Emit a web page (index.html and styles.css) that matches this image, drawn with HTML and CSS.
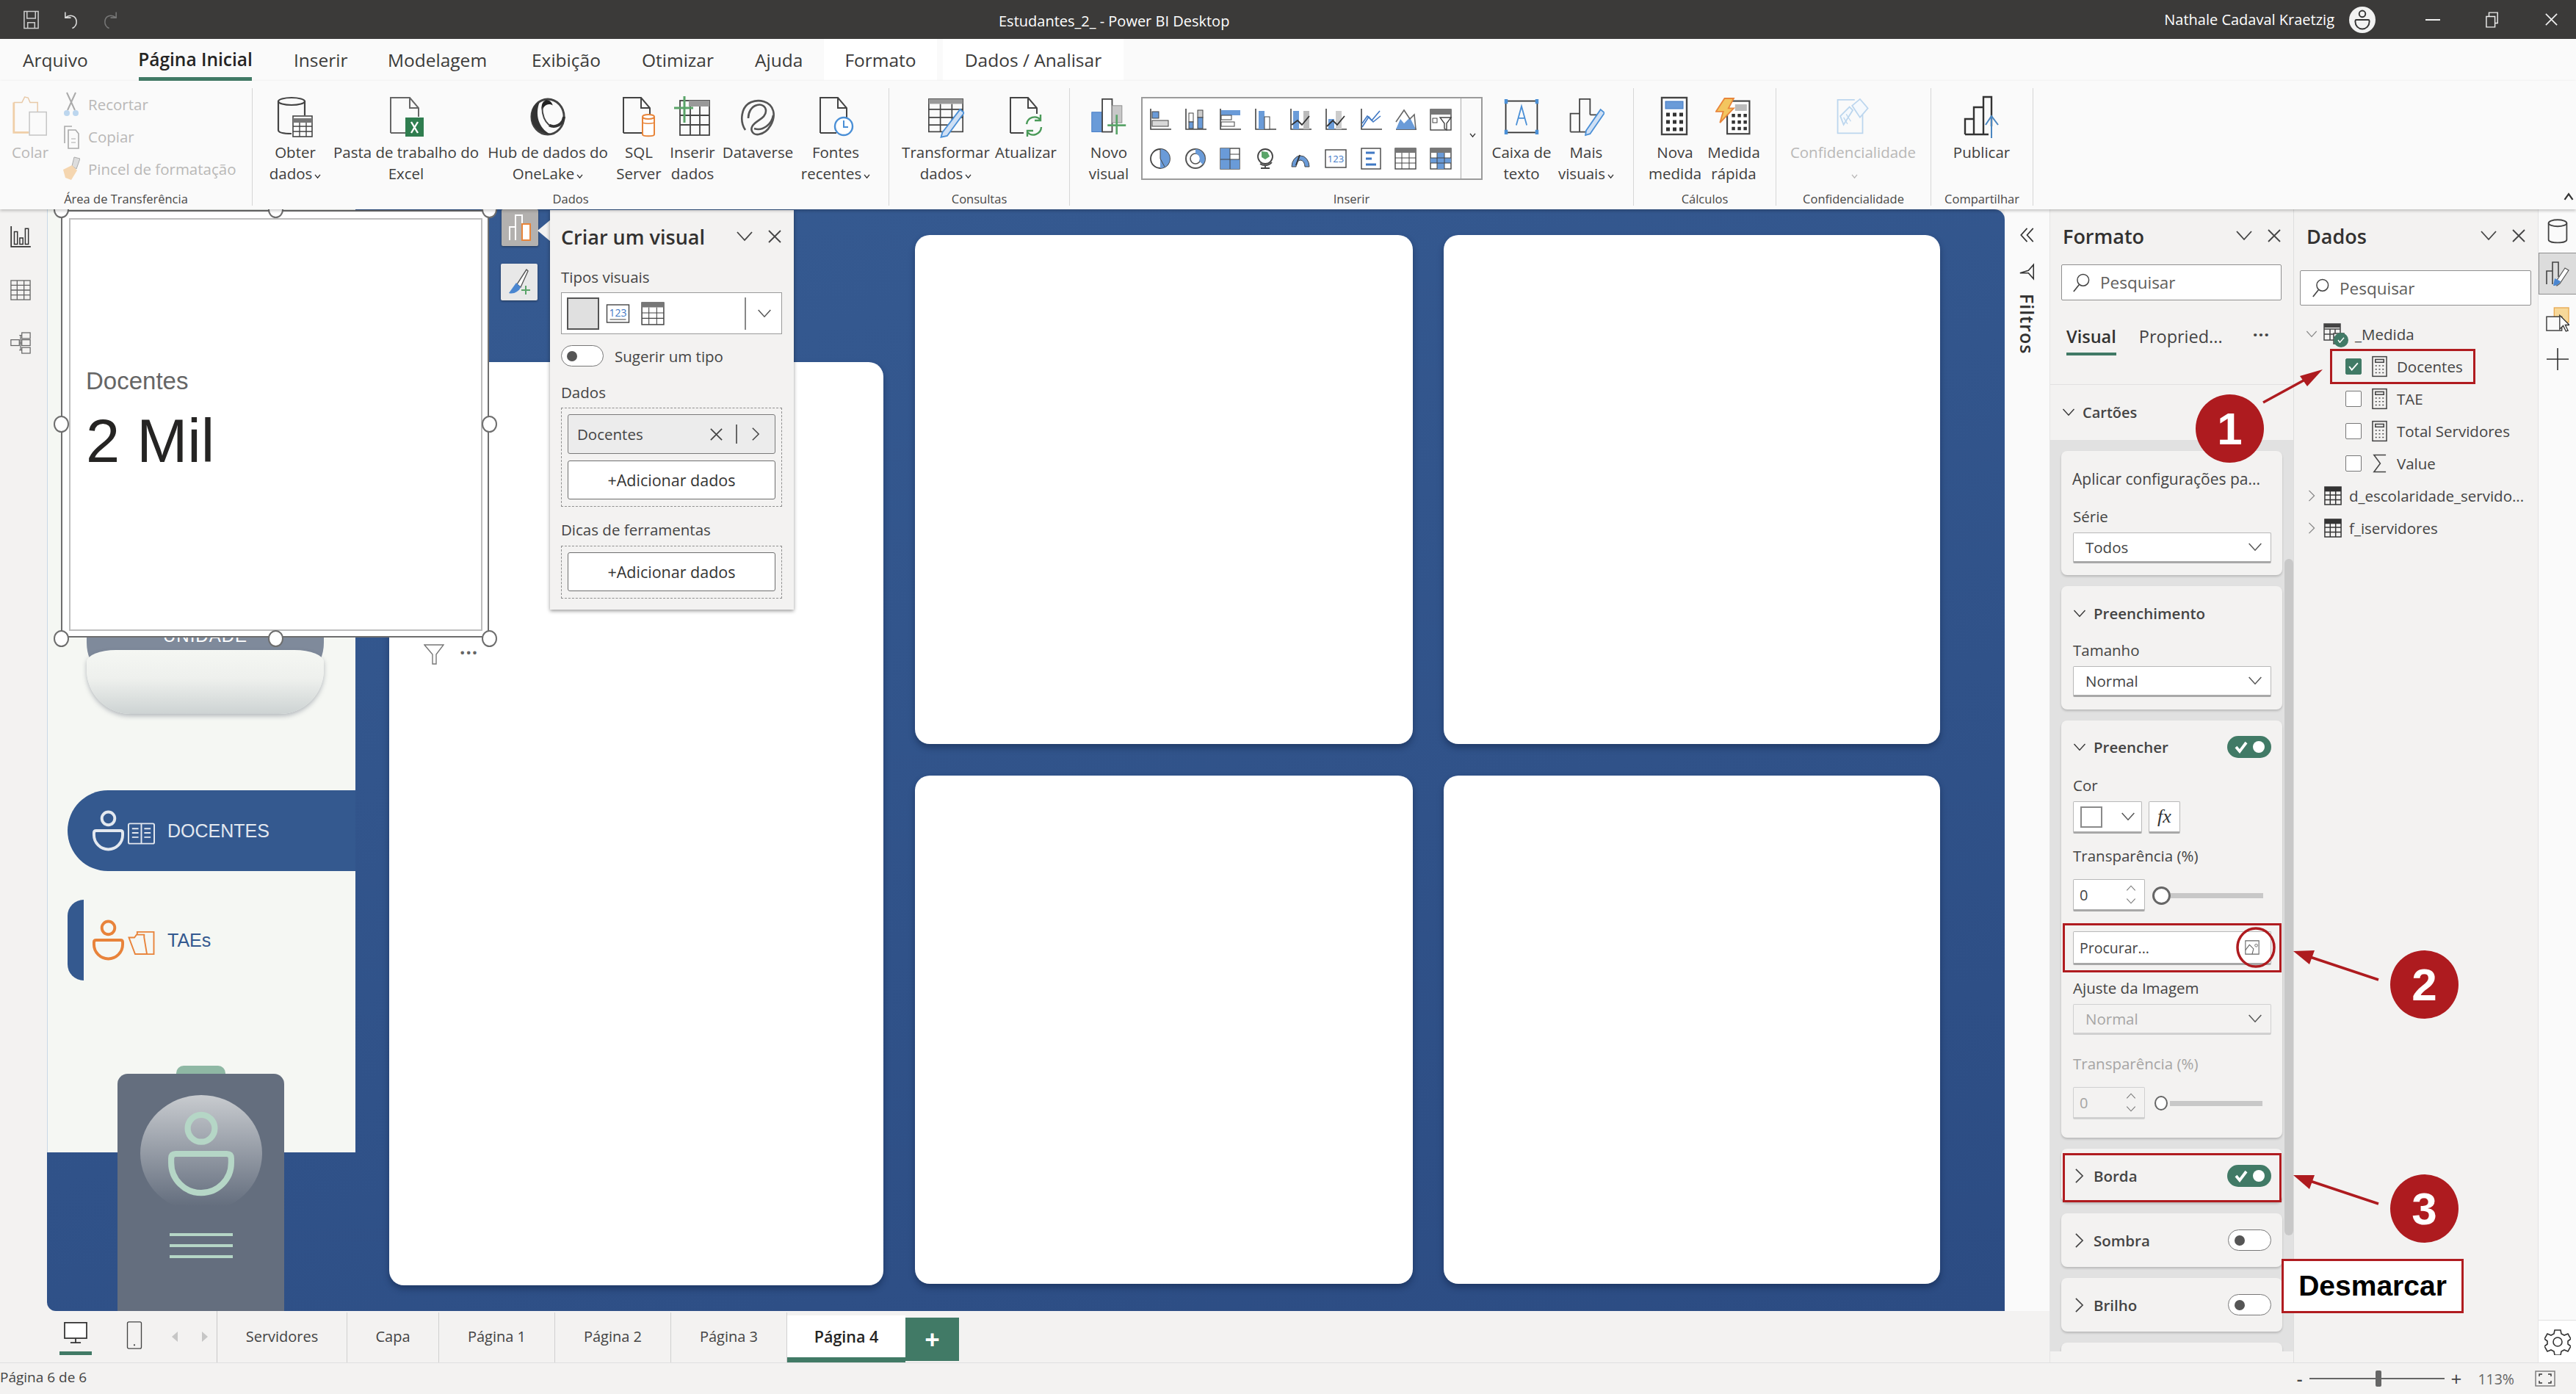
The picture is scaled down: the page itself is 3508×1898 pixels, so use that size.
FILE: index.html
```html
<!DOCTYPE html>
<html lang="pt-BR">
<head>
<meta charset="utf-8">
<title>Estudantes_2_ - Power BI Desktop</title>
<link rel="stylesheet" href="styles.css">
</head>
<body>
<svg class="sprite" aria-hidden="true">
  <defs>
    <symbol id="cv" viewBox="0 0 24 14"><path d="M2 1l10 11L22 1" fill="none" stroke="currentColor" stroke-width="1.8"/></symbol>
    <symbol id="cvr" viewBox="0 0 14 24"><path d="M2 2l10 10L2 22" fill="none" stroke="currentColor" stroke-width="1.8"/></symbol>
    <symbol id="xx" viewBox="0 0 20 20"><path d="M2 2l16 16M18 2L2 18" fill="none" stroke="currentColor" stroke-width="1.8"/></symbol>
    <symbol id="car" viewBox="0 0 10 8"><path d="M1 1l4 5 4-5" fill="none" stroke="currentColor" stroke-width="1.6"/></symbol>
    <symbol id="lens" viewBox="0 0 26 30"><circle cx="16" cy="11" r="8.5" fill="none" stroke="currentColor" stroke-width="1.6"/><path d="M10 18L2 28" fill="none" stroke="currentColor" stroke-width="1.8"/></symbol>
    <symbol id="person" viewBox="0 0 46 56"><g fill="none" stroke="currentColor" stroke-width="4"><circle cx="23" cy="11" r="9"/><path d="M3 31q0-3 3-3h34q3 0 3 3v3a20 20 0 0 1-40 0z"/></g></symbol>
    <symbol id="calc" viewBox="0 0 22 30"><g fill="none" stroke="#444" stroke-width="1.6"><rect x="1" y="1" width="20" height="28"/><rect x="5" y="5" width="12" height="4"/><path d="M5 14h2M10 14h2M15 14h2M5 19h2M10 19h2M15 19h2M5 24h2M10 24h2M15 24h2"/></g></symbol>
    <symbol id="tbl" viewBox="0 0 26 30"><g fill="none" stroke="#333" stroke-width="1.6"><rect x="1" y="2" width="24" height="26"/><path d="M1 8h24M1 14h24M1 21h24M9 8v20M17 8v20"/></g><rect x="1" y="2" width="24" height="6" fill="#333"/></symbol>
    <symbol id="sum" viewBox="0 0 22 30"><path d="M20 3H3l9 12L3 27h17" fill="none" stroke="#444" stroke-width="1.6"/></symbol>
    <symbol id="tog" viewBox="0 0 60 30"><rect width="60" height="30" rx="15" fill="#417a66"/><path d="M12 15l5 6 9-12" fill="none" stroke="#fff" stroke-width="3.8"/><circle cx="43" cy="15" r="8" fill="#fff"/></symbol>

    <symbol id="i-paste" viewBox="0 0 54 62"><path d="M3 10h12l4-8 5 1 3 7h11v18" fill="none" stroke="#e8c9a8" stroke-width="1.6"/><path d="M3 10v44h22" fill="none" stroke="#f0cfa8" stroke-width="3"/><rect x="26" y="24" width="25" height="34" fill="#fafafa" stroke="#c4c4c4" stroke-width="1.6"/></symbol>
    <symbol id="i-db" viewBox="0 0 50 56"><g fill="none" stroke="#444" stroke-width="2.2"><path d="M2 6v40c0 4 8 5 18 5M38 6v20"/><ellipse cx="20" cy="7" rx="18" ry="5"/></g><rect x="22" y="27" width="26" height="28" fill="#fff" stroke="#444" stroke-width="1.6"/><path d="M22 33h26" stroke="#777" stroke-width="6"/><path d="M22 41h26M22 48h26M31 36v19M40 36v19" stroke="#444" stroke-width="1.4"/></symbol>
    <symbol id="i-xl" viewBox="0 0 50 56"><path d="M4 50V2h26l12 14v12M30 2v14h12M4 50h20" fill="none" stroke="#666" stroke-width="2"/><rect x="24" y="29" width="25" height="26" fill="#2f7d4f"/><path d="M32 35l9 15M41 35l-9 15" stroke="#fff" stroke-width="2.4"/></symbol>
    <symbol id="i-hub" viewBox="0 0 52 56"><ellipse cx="26" cy="28" rx="23" ry="25" fill="none" stroke="#444" stroke-width="3"/><path d="M14 8C8 24 12 44 30 53 18 53 3 44 3 28 3 16 8 8 14 8z" fill="#333"/><path d="M24 4c4 0 8 3 9 8C26 8 20 12 18 20 16 12 18 6 24 4z" fill="#222"/><path d="M49 28C47 40 36 44 28 40" fill="none" stroke="#333" stroke-width="4"/><path d="M18 14c0 10 3 20 10 26" fill="none" stroke="#444" stroke-width="2"/></symbol>
    <symbol id="i-sql" viewBox="0 0 50 56"><path d="M4 50V2h24l12 14v10M28 2v14h12M4 50h26" fill="none" stroke="#444" stroke-width="2"/><g fill="#fff" stroke="#e8853a" stroke-width="2"><path d="M30 28v24c0 3 16 3 16 0V28"/><ellipse cx="38" cy="28" rx="8" ry="3"/></g><path d="M30 35c0 3 16 3 16 0" fill="none" stroke="#e8853a" stroke-width="1.6"/></symbol>
    <symbol id="i-ins" viewBox="0 0 50 56"><g fill="none" stroke="#444" stroke-width="1.8"><rect x="8" y="6" width="40" height="47"/><path d="M8 26h40M8 39h40M22 14v39M35 14v39"/></g><rect x="20" y="6" width="28" height="8" fill="#999"/><path d="M14 0v36M0 16h26" stroke="#5aa469" stroke-width="3"/></symbol>
    <symbol id="i-dv" viewBox="0 0 50 56"><g fill="none" stroke="#555" stroke-width="2.6"><path d="M8 46C0 34 2 14 16 8c10-4 26-2 30 12 3 12-6 30-20 32-8 1-12-6-8-12 6-8 18-10 18-20 0-6-6-10-12-8-8 2-12 10-12 18"/><path d="M20 44c12 4 24-6 26-18"/></g></symbol>
    <symbol id="i-rec" viewBox="0 0 50 56"><path d="M4 50V2h24l12 14v14M28 2v14h12M4 50h22" fill="none" stroke="#444" stroke-width="2"/><circle cx="36" cy="41" r="12" fill="#fff" stroke="#4a8fd6" stroke-width="2.4"/><path d="M36 33v9h6" fill="none" stroke="#4a8fd6" stroke-width="2"/></symbol>
    <symbol id="i-tr" viewBox="0 0 54 58"><g fill="none" stroke="#444" stroke-width="1.8"><rect x="2" y="3" width="50" height="48"/><path d="M2 18h50M2 30h50M2 41h30M19 10v41M36 10v30"/></g><rect x="2" y="3" width="50" height="7" fill="#999"/><path d="M22 52l26-34 6 5-25 34-9 2z" fill="#cfe0f5" stroke="#4a8fd6" stroke-width="2"/></symbol>
    <symbol id="i-ref" viewBox="0 0 50 56"><path d="M4 50V2h24l12 14v8M28 2v14h12M4 50h18" fill="none" stroke="#444" stroke-width="2"/><path d="M26 38a11 11 0 0 1 19-6M46 42a11 11 0 0 1-19 7M45 25v8h-8M27 55v-8h8" fill="none" stroke="#4a9a58" stroke-width="2.4"/></symbol>
    <symbol id="i-new" viewBox="0 0 56 58"><rect x="2" y="22" width="16" height="30" fill="#6a9bd8" stroke="#3f78c4"/><rect x="18" y="2" width="15" height="50" fill="#fff" stroke="#444" stroke-width="2"/><rect x="33" y="12" width="15" height="26" fill="#c8c8c8" stroke="#888"/><path d="M40 26v30M26 42h28" stroke="#5aa469" stroke-width="3"/></symbol>
    <symbol id="i-tb" viewBox="0 0 56 58"><rect x="4" y="5" width="48" height="48" fill="none" stroke="#333" stroke-width="2"/><path d="M2 2h5v7H2zM49 2h5v7h-5zM2 49h5v7H2zM49 49h5v7h-5z" fill="#4a8fd6"/><path d="M20 42L28 13l8 29M23 31h10" fill="none" stroke="#4a8fd6" stroke-width="2"/></symbol>
    <symbol id="i-more" viewBox="0 0 56 58"><path d="M4 52V24h14M18 52V2h16v24M4 52h26" fill="none" stroke="#444" stroke-width="2"/><path d="M34 26h12v6" fill="none" stroke="#444" stroke-width="2"/><path d="M28 50l22-32 6 5-22 32-7 2z" fill="#cfe0f5" stroke="#4a8fd6" stroke-width="2"/></symbol>
    <symbol id="i-calc" viewBox="0 0 40 58"><rect x="2" y="3" width="34" height="50" fill="#fff" stroke="#444" stroke-width="2.4"/><rect x="7" y="8" width="24" height="10" fill="#6a9bd8" stroke="#3f78c4"/><path d="M8 26h5M17 26h5M26 26h5M8 36h5M17 36h5M26 36h5M8 46h5M17 46h5M26 46h5" stroke="#333" stroke-width="5"/></symbol>
    <symbol id="i-quick" viewBox="0 0 56 58"><rect x="18" y="5" width="34" height="50" fill="#fff" stroke="#444" stroke-width="2.4"/><rect x="30" y="10" width="18" height="10" fill="#bbb"/><path d="M25 27h5M34 27h5M43 27h5M25 37h5M34 37h5M43 37h5M25 47h5M34 47h5M43 47h5" stroke="#333" stroke-width="5"/><path d="M14 1h14l-8 15h8L7 38l5-17H1z" fill="#f3c55f" stroke="#e8853a" stroke-width="2"/></symbol>
    <symbol id="i-conf" viewBox="0 0 56 58"><path d="M30 3H4v51h38V26" fill="none" stroke="#bcd6ee" stroke-width="2"/><g fill="#f5f9fd" stroke="#bcd6ee" stroke-width="2"><path d="M8 28L22 14l5 5-14 22z"/><path d="M26 12L38 2l12 14-12 14z"/></g><path d="M13 30l6 10M17 25l7 11" stroke="#bcd6ee" stroke-width="1.5"/></symbol>
    <symbol id="i-pub" viewBox="0 0 50 58"><path d="M2 53V32h12v21M14 32V16h13v37M27 16V2h11v40M2 53h32" fill="none" stroke="#333" stroke-width="2.4"/><path d="M38 58V28M30 40l8-12 9 12" fill="none" stroke="#4a86c0" stroke-width="2"/></symbol>

    <symbol id="g1" viewBox="0 0 30 30"><path d="M2 0v28h28" fill="none" stroke="#444" stroke-width="1.6"/><rect x="4" y="4" width="9" height="9" fill="#6a9bd8" stroke="#444"/><rect x="4" y="16" width="22" height="8" fill="#d8d8d8" stroke="#444"/></symbol>
    <symbol id="g2" viewBox="0 0 30 30"><path d="M2 0v28h28" fill="none" stroke="#444" stroke-width="1.6"/><rect x="6" y="6" width="6" height="12" fill="#fff" stroke="#444"/><rect x="6" y="18" width="6" height="9" fill="#6a9bd8" stroke="#444"/><rect x="18" y="2" width="7" height="10" fill="#ccc" stroke="#444"/><rect x="18" y="12" width="7" height="15" fill="#6a9bd8" stroke="#444"/></symbol>
    <symbol id="g3" viewBox="0 0 30 30"><path d="M2 0v28h28" fill="none" stroke="#444" stroke-width="1.6"/><rect x="3" y="2" width="26" height="7" fill="#6a9bd8"/><rect x="3" y="9" width="14" height="6" fill="#fff" stroke="#444"/><rect x="3" y="18" width="18" height="6" fill="#fff" stroke="#444"/></symbol>
    <symbol id="g4" viewBox="0 0 30 30"><path d="M2 0v28h28" fill="none" stroke="#444" stroke-width="1.6"/><rect x="6" y="3" width="8" height="25" fill="#6a9bd8"/><rect x="14" y="11" width="7" height="17" fill="#fff" stroke="#444"/></symbol>
    <symbol id="g5" viewBox="0 0 30 30"><path d="M2 0v28h28" fill="none" stroke="#444" stroke-width="1.6"/><rect x="5" y="3" width="8" height="25" fill="#6a9bd8"/><rect x="19" y="3" width="8" height="25" fill="#bbb"/><path d="M3 22l8-6 6 6 10-12" fill="none" stroke="#333" stroke-width="1.8"/></symbol>
    <symbol id="g6" viewBox="0 0 30 30"><path d="M2 0v28h28" fill="none" stroke="#444" stroke-width="1.6"/><rect x="5" y="14" width="8" height="14" fill="#6a9bd8"/><rect x="15" y="3" width="8" height="25" fill="#ccc"/><path d="M3 24l8-8 6 6 10-12" fill="none" stroke="#333" stroke-width="1.8"/></symbol>
    <symbol id="g7" viewBox="0 0 30 30"><path d="M2 0v28h28" fill="none" stroke="#444" stroke-width="1.6"/><path d="M3 20l7-10 6 6 11-13M3 25l9-14 6 7 10-8" fill="none" stroke="#3f78c4" stroke-width="1.6"/></symbol>
    <symbol id="g8" viewBox="0 0 30 30"><path d="M2 28h28" stroke="#444" stroke-width="1.6"/><path d="M2 28l6-14 5 6 8-8 8 16z" fill="#6a9bd8"/><path d="M2 18L13 2l8 12 6-6 2 20" fill="none" stroke="#666" stroke-width="1.6"/></symbol>
    <symbol id="g9" viewBox="0 0 30 30"><rect x="1" y="1" width="28" height="28" fill="none" stroke="#444" stroke-width="1.4"/><rect x="1" y="1" width="28" height="7" fill="#777"/><rect x="4" y="13" width="6" height="6" fill="none" stroke="#444"/><path d="M14 12h15l-6 8v9l-3-2v-7z" fill="#fff" stroke="#444" stroke-width="1.4"/></symbol>
    <symbol id="g10" viewBox="0 0 30 30"><circle cx="15" cy="15" r="13" fill="#fff" stroke="#444" stroke-width="1.8"/><path d="M15 15V2a13 13 0 0 1 0 26z" fill="#6a9bd8"/><path d="M15 2v13l6 11" fill="none" stroke="#444"/></symbol>
    <symbol id="g11" viewBox="0 0 30 30"><circle cx="15" cy="15" r="13" fill="none" stroke="#555" stroke-width="2"/><circle cx="15" cy="15" r="7" fill="none" stroke="#555" stroke-width="1.6"/><path d="M15 2a13 13 0 0 1 10 21l-5-5a7 7 0 0 0-5-10z" fill="#6a9bd8"/></symbol>
    <symbol id="g12" viewBox="0 0 30 30"><rect x="2" y="1" width="26" height="28" fill="#fff" stroke="#444" stroke-width="1.4"/><rect x="2" y="1" width="13" height="28" fill="#6a9bd8"/><rect x="15" y="16" width="13" height="13" fill="#6a9bd8"/><path d="M15 1v28M15 9h13M2 16h26" stroke="#444"/></symbol>
    <symbol id="g13" viewBox="0 0 30 30"><circle cx="15" cy="12" r="10" fill="#fff" stroke="#444" stroke-width="1.8"/><path d="M10 5l8 1 3 6-6 4-5-3z" fill="#5aa469"/><path d="M24 20a12 12 0 0 1-16 2M15 24v4M9 28h12" fill="none" stroke="#444" stroke-width="1.8"/></symbol>
    <symbol id="g14" viewBox="0 0 30 30"><path d="M3 26a12 15 0 0 1 24 0h-6a6 9 0 0 0-12 0z" fill="#6a9bd8" stroke="#444"/><path d="M9 24L14 10" stroke="#333" stroke-width="2"/></symbol>
    <symbol id="g15" viewBox="0 0 30 30"><rect x="1" y="3" width="28" height="24" fill="#fff" stroke="#444" stroke-width="1.4"/><text x="15" y="20" font-family="Open Sans, sans-serif" font-size="13" fill="#3f78c4" text-anchor="middle">123</text></symbol>
    <symbol id="g16" viewBox="0 0 30 30"><rect x="2" y="1" width="26" height="28" fill="#fff" stroke="#444" stroke-width="1.4"/><path d="M8 7h12M8 15h8M8 23h14" stroke="#3f78c4" stroke-width="3"/></symbol>
    <symbol id="g17" viewBox="0 0 30 30"><rect x="1" y="1" width="28" height="28" fill="#fff" stroke="#444" stroke-width="1.4"/><rect x="1" y="1" width="28" height="6" fill="#777"/><path d="M1 14h28M1 21h28M10 7v22M20 7v22" stroke="#444"/></symbol>
    <symbol id="g18" viewBox="0 0 30 30"><rect x="1" y="1" width="28" height="28" fill="#fff" stroke="#444" stroke-width="1.4"/><rect x="1" y="1" width="28" height="6" fill="#777"/><rect x="1" y="14" width="28" height="7" fill="#6a9bd8"/><rect x="10" y="7" width="10" height="22" fill="#6a9bd8"/><path d="M1 14h28M1 21h28M10 7v22M20 7v22" stroke="#444"/></symbol>
  </defs>
</svg>

<div class="app">
  <header class="titlebar">
    <div class="qat">
      <svg class="qat-i" viewBox="0 0 24 26"><path d="M2 1h20v24H2zM6 1v10h12V1M7 25v-8h10v8" fill="none" stroke="#ccc" stroke-width="1.6"/></svg>
      <svg class="qat-i" viewBox="0 0 24 26"><path d="M4 2v8h8M4 10c8-6 16-2 16 6 0 4-2 7-6 9" fill="none" stroke="#ddd" stroke-width="1.6"/></svg>
      <svg class="qat-i" viewBox="0 0 24 26"><path d="M20 2v8h-8M20 10c-8-6-16-2-16 6 0 4 2 7 6 9" fill="none" stroke="#777" stroke-width="1.6"/></svg>
    </div>
    <div class="doc-title">Estudantes_2_ - Power BI Desktop</div>
    <div class="winbar">
      <span class="user">Nathale Cadaval Kraetzig</span>
      <span class="avatar"><svg class="avatar-i"><use href="#person"/></svg></span>
      <span class="win-min"></span>
      <svg class="win-res" viewBox="0 0 20 24"><path d="M1 7h13v16H1zM5 7V1h13v16h-4" fill="none" stroke="#eee" stroke-width="1.6"/></svg>
      <svg class="win-x"><use href="#xx"/></svg>
    </div>
  </header>

  <nav class="tabs">
    <span class="tab t-arq">Arquivo</span>
    <span class="tab t-home">Página Inicial</span>
    <span class="tab t-ins">Inserir</span>
    <span class="tab t-mod">Modelagem</span>
    <span class="tab t-exi">Exibição</span>
    <span class="tab t-oti">Otimizar</span>
    <span class="tab t-aju">Ajuda</span>
    <span class="tab ctx t-for">Formato</span>
    <span class="tab ctx t-dad">Dados / Analisar</span>
  </nav>

  <section class="ribbon">
    <div class="grp g-clip">
      <div class="grp-body">
        <div class="rb dis b-colar"><svg class="ic"><use href="#i-paste"/></svg><span class="lb">Colar</span></div>
        <div class="small-col">
          <div class="sm"><svg class="sm-i" viewBox="0 0 24 34"><path d="M6 1l11 24M18 1L7 25" stroke="#aaa" stroke-width="2" fill="none"/><circle cx="6" cy="29" r="4" fill="#bcd6ee"/><circle cx="18" cy="29" r="4" fill="#bcd6ee"/></svg>Recortar</div>
          <div class="sm"><svg class="sm-i" viewBox="0 0 24 34"><path d="M3 26V3h10M8 8h10l4 5v20H8z" fill="none" stroke="#aaa" stroke-width="1.6"/><path d="M12 20h6M12 25h6" stroke="#aaa"/></svg>Copiar</div>
          <div class="sm"><svg class="sm-i" viewBox="0 0 24 34"><path d="M16 1l-3 12 6 4 5-14z" fill="#ddd" stroke="#aaa"/><path d="M1 18l12-6 7 7-8 13-8-3z" fill="#f5d6b0"/></svg>Pincel de formatação</div>
        </div>
      </div>
      <div class="grp-label">Área de Transferência</div>
    </div>

    <div class="grp g-data">
      <div class="grp-body">
        <div class="rb b-obter"><svg class="ic"><use href="#i-db"/></svg><span class="lb">Obter<br>dados<svg class="car"><use href="#car"/></svg></span></div>
        <div class="rb b-pasta"><svg class="ic"><use href="#i-xl"/></svg><span class="lb">Pasta de trabalho do<br>Excel</span></div>
        <div class="rb b-hub"><svg class="ic"><use href="#i-hub"/></svg><span class="lb">Hub de dados do<br>OneLake<svg class="car"><use href="#car"/></svg></span></div>
        <div class="rb b-sql"><svg class="ic"><use href="#i-sql"/></svg><span class="lb">SQL<br>Server</span></div>
        <div class="rb b-insd"><svg class="ic"><use href="#i-ins"/></svg><span class="lb">Inserir<br>dados</span></div>
        <div class="rb b-dv"><svg class="ic"><use href="#i-dv"/></svg><span class="lb">Dataverse</span></div>
        <div class="rb b-rec"><svg class="ic"><use href="#i-rec"/></svg><span class="lb">Fontes<br>recentes<svg class="car"><use href="#car"/></svg></span></div>
      </div>
      <div class="grp-label">Dados</div>
    </div>

    <div class="grp g-cons">
      <div class="grp-body">
        <div class="rb b-tr"><svg class="ic"><use href="#i-tr"/></svg><span class="lb">Transformar<br>dados<svg class="car"><use href="#car"/></svg></span></div>
        <div class="rb b-at"><svg class="ic"><use href="#i-ref"/></svg><span class="lb">Atualizar</span></div>
      </div>
      <div class="grp-label">Consultas</div>
    </div>

    <div class="grp g-ins">
      <div class="grp-body">
        <div class="rb b-novo"><svg class="ic"><use href="#i-new"/></svg><span class="lb">Novo<br>visual</span></div>
        <div class="gallery">
          <div class="gal-grid">
            <svg class="gi"><use href="#g1"/></svg><svg class="gi"><use href="#g2"/></svg><svg class="gi"><use href="#g3"/></svg><svg class="gi"><use href="#g4"/></svg><svg class="gi"><use href="#g5"/></svg><svg class="gi"><use href="#g6"/></svg><svg class="gi"><use href="#g7"/></svg><svg class="gi"><use href="#g8"/></svg><svg class="gi"><use href="#g9"/></svg>
            <svg class="gi"><use href="#g10"/></svg><svg class="gi"><use href="#g11"/></svg><svg class="gi"><use href="#g12"/></svg><svg class="gi"><use href="#g13"/></svg><svg class="gi"><use href="#g14"/></svg><svg class="gi"><use href="#g15"/></svg><svg class="gi"><use href="#g16"/></svg><svg class="gi"><use href="#g17"/></svg><svg class="gi"><use href="#g18"/></svg>
          </div>
          <div class="gal-more"><svg class="car"><use href="#car"/></svg></div>
        </div>
        <div class="rb b-cx"><svg class="ic"><use href="#i-tb"/></svg><span class="lb">Caixa de<br>texto</span></div>
        <div class="rb b-mais"><svg class="ic"><use href="#i-more"/></svg><span class="lb">Mais<br>visuais<svg class="car"><use href="#car"/></svg></span></div>
      </div>
      <div class="grp-label">Inserir</div>
    </div>

    <div class="grp g-calc">
      <div class="grp-body">
        <div class="rb b-nm"><svg class="ic"><use href="#i-calc"/></svg><span class="lb">Nova<br>medida</span></div>
        <div class="rb b-mr"><svg class="ic"><use href="#i-quick"/></svg><span class="lb">Medida<br>rápida</span></div>
      </div>
      <div class="grp-label">Cálculos</div>
    </div>

    <div class="grp g-conf">
      <div class="grp-body">
        <div class="rb dis b-conf"><svg class="ic"><use href="#i-conf"/></svg><span class="lb">Confidencialidade<br><svg class="car"><use href="#car"/></svg></span></div>
      </div>
      <div class="grp-label">Confidencialidade</div>
    </div>

    <div class="grp g-pub">
      <div class="grp-body">
        <div class="rb b-pub"><svg class="ic"><use href="#i-pub"/></svg><span class="lb">Publicar</span></div>
      </div>
      <div class="grp-label">Compartilhar</div>
    </div>
    <svg class="collapse" viewBox="0 0 12 10"><path d="M1 9l5-7 5 7" fill="none" stroke="#333" stroke-width="2"/></svg>
  </section>

  <div class="workspace">
    <div class="center">
      <div class="stage">
        <aside class="rail">
          <svg class="rail-i" viewBox="0 0 26 30"><path d="M1 1v26h25" fill="none" stroke="#333" stroke-width="1.6"/><path d="M5 8h4v16H5zM12 16h4v8h-4zM19 4h4v20h-4z" fill="none" stroke="#333" stroke-width="1.4"/></svg>
          <svg class="rail-i" viewBox="0 0 30 30"><g fill="none" stroke="#666" stroke-width="1.4"><rect x="1" y="1" width="28" height="28"/><path d="M1 8h28M1 15h28M1 22h28M10 1v28M20 1v28"/></g></svg>
          <svg class="rail-i" viewBox="0 0 32 34"><g fill="none" stroke="#666" stroke-width="1.4"><rect x="18" y="1" width="13" height="9"/><rect x="1" y="12" width="13" height="9"/><rect x="18" y="12" width="13" height="9"/><rect x="18" y="24" width="13" height="9"/><path d="M14 5h4M14 17h4M14 28h4M16 5v23"/></g></svg>
        </aside>

        <main class="canvas">
          <div class="side-panel"></div>
          <div class="nav-gray"><span class="nav-gray-t">UNIDADE</span></div>
          <div class="nav-light"></div>
          <div class="pill-doc">
            <svg class="p-person"><use href="#person"/></svg>
            <svg class="p-obj" viewBox="0 0 38 32"><g fill="none" stroke="currentColor" stroke-width="2"><rect x="1" y="2" width="36" height="28" rx="2"/><path d="M19 2v28M6 9h9M6 15h9M6 21h9M23 9h9M23 15h9M23 21h9"/></g></svg>
            <span class="pill-t">DOCENTES</span>
          </div>
          <div class="pill-tae">
            <span class="tae-bar"></span>
            <svg class="p-person"><use href="#person"/></svg>
            <svg class="p-obj" viewBox="0 0 38 36"><g fill="none" stroke="currentColor" stroke-width="2"><path d="M13 6V2h24v32H10"/><path d="M1 10h8l3-4h11v4l4 24H10z"/></g></svg>
            <span class="pill-t">TAEs</span>
          </div>
          <div class="badge-tab"></div>
          <div class="badge">
            <div class="badge-photo"><svg class="badge-person"><use href="#person"/></svg></div>
            <div class="badge-lines"><i></i><i></i><i></i></div>
          </div>

          <div class="card c1"></div>
          <div class="card c2"></div>
          <div class="card c3"></div>
          <div class="card c4"></div>
          <div class="card c5"></div>

          <svg class="v-funnel" viewBox="0 0 28 28"><path d="M1 1h26L17 14v13h-5V14z" fill="none" stroke="#777" stroke-width="1.4"/></svg>
          <span class="v-dots">···</span>

          <div class="selected">
            <div class="sel-inner">
              <div class="kpi-label">Docentes</div>
              <div class="kpi-value">2 Mil</div>
            </div>
            <i class="h h-tl"></i><i class="h h-tc"></i><i class="h h-tr"></i>
            <i class="h h-ml"></i><i class="h h-mr"></i>
            <i class="h h-bl"></i><i class="h h-bc"></i><i class="h h-br"></i>
          </div>

          <div class="bv-btn active"><svg class="bv-i" viewBox="0 0 32 38"><path d="M2 36V18h8v18M10 36V2h9v34" fill="none" stroke="#fff" stroke-width="2"/><rect x="19" y="14" width="11" height="22" fill="#fff" stroke="#e8853a" stroke-width="2"/></svg></div>
          <div class="bv-btn second"><svg class="bv-i" viewBox="0 0 32 38"><path d="M26 2L13 22l5 4L28 4z" fill="#fff" stroke="#555" stroke-width="1.4"/><path d="M12 20L2 34c6 2 14-2 16-8z" fill="#4a86d0"/><path d="M25 24v12M19 30h12" stroke="#5aa469" stroke-width="2"/></svg></div>
          <div class="bv-arrow"></div>

          <div class="popup">
            <div class="pane-head pop-head">
              <span class="pop-title">Criar um visual</span>
              <svg class="h-cv"><use href="#cv"/></svg>
              <svg class="h-x"><use href="#xx"/></svg>
            </div>
            <div class="pop-lb pl-a">Tipos visuais</div>
            <div class="type-box">
              <span class="type-sq"></span>
              <svg class="type-i1" viewBox="0 0 32 26"><rect x="1" y="1" width="30" height="24" fill="#fff" stroke="#444" stroke-width="1.4"/><text x="16" y="17" font-family="Open Sans, sans-serif" font-size="14" fill="#3f78c4" text-anchor="middle">123</text><path d="M5 21h22" stroke="#444"/></svg>
              <svg class="type-i2"><use href="#g17"/></svg>
              <span class="type-div"></span>
              <svg class="type-cv"><use href="#cv"/></svg>
            </div>
            <div class="suggest">
              <span class="toggle-off"><i></i></span>
              <span class="suggest-t">Sugerir um tipo</span>
            </div>
            <div class="pop-lb pl-b">Dados</div>
            <div class="well w-a">
              <div class="field">
                <span class="field-t">Docentes</span>
                <svg class="field-x"><use href="#xx"/></svg>
                <span class="field-sep"></span>
                <svg class="field-r"><use href="#cvr"/></svg>
              </div>
              <div class="add">+Adicionar dados</div>
            </div>
            <div class="pop-lb pl-c">Dicas de ferramentas</div>
            <div class="well w-b">
              <div class="add">+Adicionar dados</div>
            </div>
          </div>
        </main>

        <aside class="filters">
          <svg class="f-dbl" viewBox="0 0 22 24"><path d="M11 2L2 12l9 10M20 2l-9 10 9 10" fill="none" stroke="#333" stroke-width="1.8"/></svg>
          <svg class="f-fun" viewBox="0 0 24 24"><path d="M22 1v22l-8-9H1l13-4z" fill="none" stroke="#333" stroke-width="1.8"/></svg>
          <span class="f-text">Filtros</span>
        </aside>
      </div>

      <div class="tabbar">
        <div class="tb-tools">
          <div class="tb-desk"><svg class="tb-mon" viewBox="0 0 36 34"><rect x="1" y="1" width="34" height="24" fill="#fff" stroke="#333" stroke-width="2"/><path d="M18 25v7M10 32h16" stroke="#333" stroke-width="2"/></svg></div>
          <svg class="tb-phone" viewBox="0 0 22 40"><rect x="1" y="1" width="20" height="38" rx="2" fill="none" stroke="#444" stroke-width="1.4"/><circle cx="11" cy="34" r="1.2" fill="#444"/></svg>
          <span class="tb-arr left"></span>
          <span class="tb-arr right"></span>
        </div>
        <span class="ptab p-serv">Servidores</span>
        <span class="ptab p-capa">Capa</span>
        <span class="ptab p-n">Página 1</span>
        <span class="ptab p-n">Página 2</span>
        <span class="ptab p-n">Página 3</span>
        <span class="ptab p-on">Página 4</span>
        <span class="ptab-add">+</span>
      </div>
    </div>

    <section class="format">
      <div class="pane-head">
        <span class="pane-title">Formato</span>
        <svg class="h-cv"><use href="#cv"/></svg>
        <svg class="h-x"><use href="#xx"/></svg>
      </div>
      <div class="search s-f"><svg class="lens"><use href="#lens"/></svg>Pesquisar</div>
      <div class="ftabs">
        <span class="ftab on">Visual</span>
        <span class="ftab">Propried...</span>
        <span class="fdots">···</span>
      </div>
      <div class="fsection"><svg class="sec-cv"><use href="#cv"/></svg>Cartões</div>
      <div class="flist">
        <span class="fscroll"></span>

        <div class="fcard fc-a">
          <div class="fc-strong">Aplicar configurações pa...</div>
          <div class="fc-lb lb-serie">Série</div>
          <div class="sel">Todos<svg class="sel-cv"><use href="#cv"/></svg></div>
        </div>

        <div class="fcard fc-b">
          <div class="fc-head"><svg class="sec-cv"><use href="#cv"/></svg>Preenchimento</div>
          <div class="fc-lb lb-tam">Tamanho</div>
          <div class="sel">Normal<svg class="sel-cv"><use href="#cv"/></svg></div>
        </div>

        <div class="fcard fc-c">
          <div class="fc-head"><svg class="sec-cv"><use href="#cv"/></svg>Preencher<svg class="tog-on"><use href="#tog"/></svg></div>
          <div class="fc-lb lb-cor">Cor</div>
          <div class="color-row">
            <div class="color-sel"><span class="swatch"></span><svg class="sel-cv"><use href="#cv"/></svg></div>
            <div class="fx">fx</div>
          </div>
          <div class="fc-lb lb-tr">Transparência (%)</div>
          <div class="slide-row">
            <div class="num">0<span class="spin"><svg class="spin-u"><use href="#cv"/></svg><svg class="spin-d"><use href="#cv"/></svg></span></div>
            <i class="knob"></i><i class="track"></i>
          </div>
          <div class="browse">Procurar...<svg class="browse-i" viewBox="0 0 24 24"><path d="M2 2h20v20H2z" fill="none" stroke="#666" stroke-width="1.2"/><path d="M2 16l6-8 6 6-2 8" fill="none" stroke="#666" stroke-width="1.2"/><circle cx="18" cy="9" r="2" fill="none" stroke="#666"/></svg></div>
          <div class="fc-lb lb-aj">Ajuste da Imagem</div>
          <div class="sel off">Normal<svg class="sel-cv"><use href="#cv"/></svg></div>
          <div class="fc-lb lb-tr2 dim">Transparência (%)</div>
          <div class="slide-row off">
            <div class="num">0<span class="spin"><svg class="spin-u"><use href="#cv"/></svg><svg class="spin-d"><use href="#cv"/></svg></span></div>
            <i class="knob small"></i><i class="track"></i>
          </div>
        </div>

        <div class="fcard fc-row"><svg class="row-cv"><use href="#cvr"/></svg>Borda<svg class="tog-on"><use href="#tog"/></svg></div>
        <div class="fcard fc-row"><svg class="row-cv"><use href="#cvr"/></svg>Sombra<span class="toggle-off sm-off"><i></i></span></div>
        <div class="fcard fc-row"><svg class="row-cv"><use href="#cvr"/></svg>Brilho<span class="toggle-off sm-off"><i></i></span></div>
        <div class="fcard fc-row"></div>
      </div>
      <div class="fstrip"></div>
    </section>

    <section class="data">
      <div class="pane-head">
        <span class="pane-title">Dados</span>
        <svg class="h-cv"><use href="#cv"/></svg>
        <svg class="h-x"><use href="#xx"/></svg>
      </div>
      <div class="search s-d"><svg class="lens"><use href="#lens"/></svg>Pesquisar</div>
      <ul class="tree">
        <li class="tr tr-top">
          <svg class="tr-cv"><use href="#cv"/></svg>
          <svg class="tr-tb" viewBox="0 0 30 30"><g fill="none" stroke="#444" stroke-width="1.5"><rect x="1" y="1" width="22" height="22"/><path d="M1 8h22M1 15h22M9 8v15M16 8v15"/><rect x="14" y="14" width="14" height="14" fill="#f3f2f1"/><path d="M14 19h14"/></g><rect x="1" y="1" width="22" height="5" fill="#444"/></svg>
          <span class="ok-badge"><svg class="ok-i" viewBox="0 0 12 10"><path d="M1 5l3 4 7-8" fill="none" stroke="#fff" stroke-width="1.8"/></svg></span>
          <span class="tr-name nm">_Medida</span>
        </li>
        <li class="tr tr-leaf"><span class="chk on"><svg class="chk-i" viewBox="0 0 12 10"><path d="M1 5l3 4 7-8" fill="none" stroke="#fff" stroke-width="1.6"/></svg></span><svg class="leaf-i"><use href="#calc"/></svg><span class="tr-name">Docentes</span></li>
        <li class="tr tr-leaf"><span class="chk"></span><svg class="leaf-i"><use href="#calc"/></svg><span class="tr-name">TAE</span></li>
        <li class="tr tr-leaf"><span class="chk"></span><svg class="leaf-i"><use href="#calc"/></svg><span class="tr-name">Total Servidores</span></li>
        <li class="tr tr-leaf"><span class="chk"></span><svg class="leaf-i"><use href="#sum"/></svg><span class="tr-name">Value</span></li>
        <li class="tr tr-top"><svg class="tr-cr"><use href="#cvr"/></svg><svg class="tr-grid"><use href="#tbl"/></svg><span class="tr-name">d_escolaridade_servido...</span></li>
        <li class="tr tr-top"><svg class="tr-cr"><use href="#cvr"/></svg><svg class="tr-grid"><use href="#tbl"/></svg><span class="tr-name">f_iservidores</span></li>
      </ul>
    </section>

    <aside class="siderail">
      <div class="sr sr-a"><svg class="sr-i" viewBox="0 0 26 32"><path d="M2 6v20c0 5 22 5 22 0V6" fill="none" stroke="#444" stroke-width="1.6"/><ellipse cx="13" cy="6" rx="11" ry="4" fill="none" stroke="#444" stroke-width="1.6"/></svg></div>
      <div class="sr sr-b"><svg class="sr-i" viewBox="0 0 32 36"><path d="M1 32V14h8v18M9 14V2h8v20" fill="none" stroke="#444" stroke-width="1.6"/><path d="M14 28L26 10l5 3-12 18-4 3z" fill="#fff" stroke="#555" stroke-width="1.2"/><path d="M12 24l-2 10c4 0 8-2 10-6z" fill="#4a86d0"/></svg></div>
      <div class="sr sr-c"><svg class="sr-i" viewBox="0 0 34 36"><rect x="12" y="1" width="21" height="21" fill="#f7d899" stroke="#e8a850" stroke-width="1.4"/><rect x="1" y="14" width="22" height="20" fill="#fafafa" stroke="#444" stroke-width="1.6"/><path d="M20 12v20l5-5 4 8 3-1-4-8h6z" fill="#fff" stroke="#333" stroke-width="1.4"/></svg></div>
      <div class="sr sr-d"><svg class="sr-i plus" viewBox="0 0 30 30"><path d="M15 0v30M0 15h30" stroke="#333" stroke-width="1.6"/></svg></div>
      <div class="sr-gear"><svg class="gear" viewBox="0 0 36 36"><path d="M14 2h8l1 5 4 2 5-2 4 7-4 3v4l4 3-4 7-5-2-4 2-1 5h-8l-1-5-4-2-5 2-4-7 4-3v-4l-4-3 4-7 5 2 4-2z" fill="none" stroke="#333" stroke-width="1.6"/><circle cx="18" cy="18" r="6" fill="none" stroke="#333" stroke-width="1.6"/></svg></div>
    </aside>
  </div>

  <footer class="status">
    <span class="st-page">Página 6 de 6</span>
    <div class="zoomer">
      <span class="z-sign">-</span>
      <span class="z-track"><i class="z-thumb"></i></span>
      <span class="z-sign plus">+</span>
      <span class="z-val">113%</span>
      <svg class="z-fit" viewBox="0 0 28 22"><rect x="1" y="1" width="26" height="20" fill="none" stroke="#777" stroke-width="1.4"/><path d="M6 8V5h4M22 8V5h-4M6 14v3h4M22 14v3h-4" fill="none" stroke="#333" stroke-width="1.4"/></svg>
    </div>
  </footer>

  <div class="redbox rb-1"></div>
  <div class="redbox rb-2"></div>
  <div class="redbox rb-3"></div>
  <div class="redbox rb-4">Desmarcar</div>
  <div class="step s-1">1</div>
  <div class="step s-2">2</div>
  <div class="step s-3">3</div>
  <svg class="marks" viewBox="0 0 3508 1898">
    <g class="mark-line">
      <path d="M3082 548L3148 512"/>
      <path d="M3239 1334L3140 1301"/>
      <path d="M3239 1639L3140 1606"/>
      <ellipse cx="3072" cy="1290" rx="25" ry="26"/>
    </g>
    <g class="mark-fill">
      <polygon points="3163,503 3132,512 3142,526"/>
      <polygon points="3123,1295 3152,1294 3145,1313"/>
      <polygon points="3123,1600 3152,1600 3145,1619"/>
    </g>
  </svg>
</div>
</body>
</html>
```
FILE: styles.css
```css
* { box-sizing: border-box; }
html, body { margin: 0; padding: 0; }
html { height: 1898px; overflow: hidden; }
body { width: 3508px; height: 1898px; overflow: hidden; background: #f3f2f1; font-family: "Open Sans", "Noto Sans", sans-serif; color: #323130; }
.sprite { position: absolute; width: 0; height: 0; }
.app { position: relative; display: flex; flex-direction: column; width: 3508px; height: 1898px; overflow: hidden; }

/* title bar */
.titlebar { position: relative; display: flex; align-items: center; justify-content: space-between; height: 53px; background: #3b3a39; color: #fff; font-size: 20px; flex: none; }
.qat { display: flex; align-items: center; gap: 31px; padding-left: 31px; }
.qat-i { width: 23px; height: 26px; }
.doc-title { position: absolute; left: 1360px; top: 14px; line-height: 30px; }
.winbar { display: flex; align-items: center; height: 53px; padding-right: 24px; }
.user { margin-right: 20px; }
.avatar { display: flex; align-items: center; justify-content: center; width: 36px; height: 36px; border-radius: 50%; background: #f2f2f2; color: #333; margin-right: 68px; }
.avatar-i { width: 22px; height: 28px; }
.win-min { width: 20px; height: 2px; background: #eee; margin-right: 62px; }
.win-res { width: 18px; height: 24px; margin-right: 62px; }
.win-x { width: 19px; height: 19px; color: #eee; }

/* tabs */
.tabs { display: flex; height: 57px; background: #fafafa; flex: none; }
.tab { display: flex; align-items: center; height: 57px; font-size: 24.5px; color: #3b3a39; white-space: nowrap; flex: none; }
.t-arq { margin-left: 31px; width: 158px; }
.t-home { width: 154px; justify-content: center; font-weight: 600; color: #252423; border-bottom: 5px solid #417a66; padding-top: 3px; }
.t-ins { margin-left: 57px; width: 128px; }
.t-mod { width: 196px; }
.t-exi { width: 150px; }
.t-oti { width: 154px; }
.t-aju { width: 94px; }
.ctx { background: #fff; justify-content: center; height: 56px; }
.t-for { width: 154px; }
.t-dad { margin-left: 8px; width: 246px; }

/* ribbon */
.ribbon { position: relative; display: flex; align-items: flex-start; height: 175px; background: #fafafa; padding-top: 10px; box-shadow: 0 2px 4px rgba(0,0,0,.22); z-index: 3; flex: none; font-size: 20.5px; color: #3f3e3d; }
.grp { display: flex; flex-direction: column; height: 160px; border-right: 1.5px solid #d6d6d6; flex: none; }
.grp-body { display: flex; height: 139px; padding-top: 10px; flex: none; }
.grp-label { height: 24px; line-height: 24px; text-align: center; font-size: 16.5px; color: #494847; flex: none; }
.g-clip { width: 344px; }
.g-data { width: 867px; }
.g-cons { width: 246px; }
.g-ins { width: 768px; }
.g-calc { width: 194px; }
.g-conf { width: 211px; }
.g-pub { width: 139px; }
.g-data .grp-body { padding-left: 8px; }
.g-cons .grp-body { padding-left: 8px; }
.g-ins .grp-body { padding-left: 13px; }
.g-calc .grp-body { padding-left: 15px; }
.g-clip .grp-body { padding-left: 4px; }

.rb { display: flex; flex-direction: column; align-items: center; flex: none; text-align: center; }
.ic { width: 50px; height: 58px; flex: none; }
.lb { display: block; margin-top: 5px; line-height: 29px; white-space: nowrap; }
.car { width: 9px; height: 7px; margin-left: 3px; color: #333; }
.dis { color: #b9b8b7; }
.dis .car { color: #b9b8b7; }
.b-colar { width: 74px; }
.b-obter { width: 100px; }
.b-pasta { width: 202px; }
.b-hub { width: 184px; }
.b-sql { width: 64px; }
.b-insd { width: 82px; }
.b-dv { width: 96px; }
.b-rec { width: 116px; }
.b-tr { width: 138px; }
.b-at { width: 80px; }
.b-novo { width: 80px; }
.b-cx { width: 96px; margin-left: 5px; }
.b-mais { width: 80px; }
.b-nm { width: 82px; }
.b-mr { width: 78px; }
.b-conf { width: 209px; }
.b-pub { width: 137px; }
.small-col { display: flex; flex-direction: column; gap: 14px; padding-left: 7px; color: #b9b8b7; margin-top: -3px; }
.sm { display: flex; align-items: center; height: 30px; white-space: nowrap; }
.sm-i { width: 24px; height: 34px; margin-right: 11px; flex: none; }

.gallery { display: flex; width: 465px; height: 113px; margin-left: 4px; margin-top: 2px; background: #fff; border: 2px solid #9b9b9b; flex: none; }
.gal-grid { display: grid; grid-template-columns: repeat(9, 47.8px); grid-auto-rows: 53px; width: 434px; align-items: center; justify-items: center; padding-top: 2px; }
.gi { width: 30px; height: 32px; }
.gal-more { display: flex; align-items: center; justify-content: center; width: 28px; border-left: 1.5px solid #aaa; background: #fafafa; padding-bottom: 8px; }
.collapse { position: absolute; right: 3px; top: 152px; width: 14px; height: 11px; }

/* workspace */
.workspace { display: flex; height: 1570px; flex: none; }
.center { display: flex; flex-direction: column; width: 2791px; flex: none; }
.stage { display: flex; height: 1500px; flex: none; }
.rail { display: flex; flex-direction: column; align-items: center; width: 64px; padding: 22px 8px 0 0; background: #f3f2f1; flex: none; }
.rail-i { width: 28px; height: 32px; margin-bottom: 40px; }

/* canvas: free placement of report visuals */
.canvas { position: relative; flex: 1; background: linear-gradient(165deg, #365b92 0%, #2c4c83 100%); border-radius: 0 14px 0 12px; }
.side-panel { position: absolute; left: 0; top: 0; width: 420px; height: 1284px; background: #f5f7f3; border-left: 1.5px solid #c9d8e6; }
.nav-gray { position: absolute; left: 54px; top: 500px; width: 323px; height: 150px; border-radius: 70px 70px 60px 60px; background: #7f8a9b; text-align: center; }
.nav-gray-t { display: block; margin-top: 66px; font: 24px/30px "Liberation Sans", sans-serif; color: #fff; letter-spacing: 1px; }
.nav-light { position: absolute; left: 54px; top: 600px; width: 323px; height: 87px; border-radius: 40px 40px 60px 60px / 16px 16px 60px 60px; background: linear-gradient(180deg, #f5f7f3 0%, #eef0ed 45%, #cdd3d3 100%); box-shadow: 0 3px 6px rgba(60,70,90,.35); }
.pill-doc { position: absolute; left: 28px; top: 791px; display: flex; align-items: center; width: 392px; height: 110px; border-radius: 55px 0 0 55px; background: #34598f; color: #e3e8ef; padding-left: 33px; }
.pill-tae { position: absolute; left: 28px; top: 940px; display: flex; align-items: center; width: 300px; height: 110px; color: #e8833a; padding-left: 33px; }
.tae-bar { position: absolute; left: 0; top: 0; width: 22px; height: 110px; border-radius: 22px 0 0 22px; background: #34598f; }
.p-person { width: 45px; height: 56px; flex: none; }
.p-obj { width: 37px; height: 34px; margin-left: 4px; margin-top: 8px; flex: none; }
.pill-t { margin-left: 17px; font: 25px/30px "Liberation Sans", sans-serif; }
.pill-tae .pill-t { color: #34598f; }
.badge-tab { position: absolute; left: 176px; top: 1166px; width: 67px; height: 14px; border-radius: 10px 10px 0 0; background: #8fb8a4; }
.badge { position: absolute; left: 96px; top: 1177px; display: flex; flex-direction: column; align-items: center; width: 227px; height: 323px; padding-top: 29px; background: #646e7e; border-radius: 14px 14px 0 0; }
.badge-photo { display: flex; align-items: center; justify-content: center; width: 166px; height: 159px; border-radius: 50%; background: linear-gradient(180deg, #c8cbcf 0%, #646e7e 95%); flex: none; }
.badge-person { width: 94px; height: 116px; color: #b5d6c6; }
.badge-lines { display: flex; flex-direction: column; gap: 11px; margin-top: 29px; }
.badge-lines i { display: block; width: 86px; height: 4px; background: #b5d6c6; }
.card { position: absolute; background: #fff; border-radius: 20px; box-shadow: 0 5px 9px rgba(10,25,55,.4); }
.c1 { left: 466px; top: 208px; width: 673px; height: 1257px; }
.c2 { left: 1182px; top: 35px; width: 678px; height: 693px; }
.c3 { left: 1902px; top: 35px; width: 676px; height: 693px; }
.c4 { left: 1182px; top: 771px; width: 678px; height: 692px; }
.c5 { left: 1902px; top: 771px; width: 676px; height: 692px; }
.v-funnel { position: absolute; left: 513px; top: 592px; width: 28px; height: 28px; }
.v-dots { position: absolute; left: 562px; top: 588px; font-size: 26px; line-height: 30px; color: #666; font-weight: 700; letter-spacing: 1px; }
.selected { position: absolute; left: 19px; top: 1px; width: 583px; height: 582px; background: #fff; border: 2px solid #6e6e6e; }
.sel-inner { position: absolute; left: 9px; top: 9px; width: 563px; height: 562px; background: #fff; border: 2px solid #bdbdbd; padding: 201px 0 0 21px; font-family: "Liberation Sans", sans-serif; }
.kpi-label { font-size: 33px; line-height: 38px; color: #666; }
.kpi-value { margin-top: 20px; font-size: 83px; line-height: 86px; color: #252423; }
.h { position: absolute; width: 21px; height: 23px; border-radius: 50%; background: #fff; border: 2px solid #6e6e6e; }
.h-tl { left: -12px; top: -14px; }
.h-tc { left: 280px; top: -14px; }
.h-tr { left: 571px; top: -14px; }
.h-ml { left: -12px; top: 278px; }
.h-mr { left: 571px; top: 278px; }
.h-bl { left: -12px; top: 570px; }
.h-bc { left: 280px; top: 570px; }
.h-br { left: 571px; top: 570px; }
.bv-btn { position: absolute; display: flex; align-items: center; justify-content: center; width: 50px; height: 50px; border-radius: 2px; box-shadow: 0 1px 3px rgba(0,0,0,.4); }
.bv-btn.active { left: 619px; top: 0; background: #b3b1af; }
.bv-btn.second { left: 618px; top: 74px; background: #e8e8e8; }
.bv-i { width: 34px; height: 38px; }
.bv-arrow { position: absolute; left: 668px; top: 14px; width: 18px; height: 30px; background: #f3f2f1; clip-path: polygon(100% 0, 100% 100%, 0 50%); }

/* build-visual popup */
.popup { position: absolute; left: 685px; top: 1px; width: 332px; height: 544px; padding: 0 16px 0 15px; background: #f3f2f1; box-shadow: 0 2px 5px rgba(0,0,0,.4); z-index: 2; }
.pane-head { display: flex; align-items: center; height: 72px; padding: 0 16px 0 17px; }
.pop-head { height: 72px; padding: 0; }
.pane-title, .pop-title { flex: 1; font-size: 27px; font-weight: 600; color: #323130; white-space: nowrap; }
.h-cv { width: 24px; height: 14px; color: #444; margin-right: 19px; }
.h-x { width: 20px; height: 20px; color: #444; }
.pop-lb { font-size: 20.5px; line-height: 26px; color: #444; }
.pl-a { margin-top: 6px; }
.pl-b { margin-top: 22px; }
.pl-c { margin-top: 18px; }
.type-box { display: flex; align-items: center; height: 57px; margin-top: 8px; padding-left: 7px; background: #fff; border: 1.5px solid #9a9a9a; }
.type-sq { width: 44px; height: 44px; background: #e0e0e0; border: 2px solid #555; }
.type-i1 { width: 33px; height: 26px; margin-left: 9px; }
.type-i2 { width: 32px; height: 34px; margin-left: 15px; }
.type-div { width: 1.5px; height: 44px; background: #888; margin-left: 109px; }
.type-cv { width: 20px; height: 12px; margin-left: 15px; color: #555; }
.suggest { display: flex; align-items: center; margin-top: 15px; font-size: 20.5px; color: #444; }
.toggle-off { display: flex; align-items: center; width: 58px; height: 29px; padding-left: 7px; background: #fff; border: 1.5px solid #777; border-radius: 15px; flex: none; }
.toggle-off i { display: block; width: 14px; height: 14px; border-radius: 50%; background: #555; }
.suggest-t { margin-left: 15px; }
.well { border: 1.5px dashed #8f8f8f; padding: 8px 8px 0; margin-top: 8px; }
.w-a { height: 135px; }
.w-b { height: 72px; margin-top: 9px; }
.field { display: flex; align-items: center; height: 54px; padding-left: 12px; background: #ececec; border: 1.5px solid #7a7a7a; border-radius: 3px; margin-bottom: 9px; font-size: 20.5px; color: #444; }
.field-t { width: 180px; }
.field-x { width: 19px; height: 19px; color: #444; }
.field-sep { width: 1.5px; height: 26px; background: #666; margin-left: 17px; }
.field-r { width: 12px; height: 20px; margin-left: 19px; color: #444; }
.add { display: flex; align-items: center; justify-content: center; height: 53px; background: #fff; border: 1.5px solid #6e6e6e; border-radius: 3px; font-size: 21.5px; color: #333; }

/* filters */
.filters { display: flex; flex-direction: column; align-items: center; width: 61px; background: #fafafa; padding-top: 24px; flex: none; }
.f-dbl { width: 21px; height: 22px; }
.f-fun { width: 21px; height: 24px; margin-top: 27px; }
.f-text { writing-mode: vertical-rl; margin-top: 18px; font-size: 25px; line-height: 26px; font-weight: 600; color: #323130; letter-spacing: 1px; }

/* page tabs */
.tabbar { display: flex; align-items: flex-end; height: 70px; background: #f3f2f1; flex: none; font-size: 20px; color: #444; }
.tb-tools { position: relative; display: flex; align-items: flex-start; width: 296px; height: 70px; border-right: 1.5px solid #c8c8c8; flex: none; }
.tb-desk { margin-left: 81px; padding-top: 15px; border-bottom: 5px solid #417a66; width: 44px; height: 60px; }
.tb-mon { display: block; width: 36px; height: 30px; margin-left: 4px; }
.tb-phone { width: 22px; height: 38px; margin-left: 47px; margin-top: 14px; }
.tb-arr { width: 0; height: 0; margin-top: 28px; border-top: 7px solid transparent; border-bottom: 7px solid transparent; }
.tb-arr.left { margin-left: 40px; border-right: 8px solid #c6c6c6; }
.tb-arr.right { margin-left: 33px; border-left: 8px solid #c6c6c6; }
.ptab { display: flex; align-items: center; justify-content: center; height: 68px; border-right: 1.5px solid #d0d0d0; padding-bottom: 4px; flex: none; }
.p-serv { width: 177px; }
.p-capa { width: 125px; }
.p-n { width: 158px; }
.p-on { width: 161px; height: 64px; background: #fff; border-right: 0; border-bottom: 7px solid #417a66; color: #252423; font-size: 21.5px; font-weight: 600; padding-bottom: 0; }
.ptab-add { display: flex; align-items: center; justify-content: center; width: 73px; height: 59px; margin-bottom: 2px; background: #417a66; color: #fff; font-size: 36px; font-weight: 700; flex: none; }

/* format pane */
.format { display: flex; flex-direction: column; width: 332px; background: #f3f2f1; border-left: 1px solid #e4e4e4; flex: none; }
.search { display: flex; align-items: center; background: #fff; border: 1.5px solid #8f8f8f; border-radius: 2px; font-size: 22.5px; color: #605e5c; flex: none; }
.lens { width: 24px; height: 28px; margin-right: 14px; color: #444; flex: none; }
.s-f { width: 300px; height: 49px; margin: 3px 0 0 15px; padding-left: 14px; }
.ftabs { display: flex; align-items: flex-start; height: 75px; padding: 33px 0 0 22px; font-size: 23.5px; flex: none; color: #444; }
.ftab { height: 42px; margin-right: 31px; line-height: 32px; }
.ftab.on { font-weight: 600; color: #323130; border-bottom: 4px solid #417a66; }
.fdots { font-weight: 700; font-size: 24px; line-height: 26px; letter-spacing: 1px; margin-left: 10px; }
.fsection { display: flex; align-items: center; height: 115px; padding: 40px 0 0 16px; font-size: 20px; font-weight: 600; color: #444; border-top: 0; background: linear-gradient(#f3f2f1 39px, #e1e1e1 39px, #e1e1e1 40px, #f3f2f1 40px); flex: none; }
.sec-cv { width: 18px; height: 11px; margin-right: 10px; color: #333; flex: none; }
.flist { position: relative; display: flex; flex-direction: column; height: 1241px; padding: 15px 0 0 15px; background: #e1e1e1; overflow: hidden; flex: none; }
.fscroll { position: absolute; right: 0; top: 162px; width: 12px; height: 921px; background: #c8c8c8; border-radius: 6px; }
.fstrip { height: 15px; background: #f3f2f1; }
.fcard { width: 301px; padding: 0 15px 0 16px; margin-bottom: 15px; background: #f3f2f1; border-radius: 8px; box-shadow: 0 2px 3px rgba(0,0,0,.18); font-size: 20.5px; color: #444; flex: none; position: relative; }
.fc-a { height: 169px; padding-top: 24px; }
.fc-b { height: 168px; }
.fc-c { height: 568px; }
.fc-strong { line-height: 28px; font-size: 21px; font-weight: 500; white-space: nowrap; margin-left: -1px; }
.fc-head { display: flex; align-items: center; height: 36px; margin-top: 19px; font-size: 20.5px; font-weight: 600; color: #444; }
.fc-head .sec-cv { margin-left: 0; }
.fc-c .fc-head { margin-top: 18px; }
.fc-lb { line-height: 26px; }
.lb-serie { margin-top: 24px; margin-bottom: 9px; }
.lb-tam { margin-top: 19px; margin-bottom: 9px; }
.lb-cor { margin-top: 21px; margin-bottom: 9px; }
.lb-tr { margin-top: 17px; margin-bottom: 19px; }
.lb-aj { margin-top: 18px; margin-bottom: 9px; }
.lb-tr2 { margin-top: 26px; margin-bottom: 19px; }
.dim { color: #a6a5a4; }
.sel { display: flex; align-items: center; justify-content: space-between; height: 42px; padding: 0 11px 0 16px; background: #fff; border: 1.5px solid #b8b8b8; border-bottom: 3px solid #a8a8a8; border-radius: 2px; font-size: 20.5px; }
.sel.off { background: #f3f2f1; color: #a6a5a4; border-color: #d0d0d0; }
.sel-cv { width: 20px; height: 12px; color: #555; flex: none; }
.tog-on { width: 60px; height: 30px; margin-left: auto; flex: none; }
.color-row { display: flex; gap: 9px; }
.color-sel { display: flex; align-items: center; justify-content: space-between; width: 94px; height: 44px; padding: 0 8px 0 9px; background: #fff; border: 1.5px solid #b8b8b8; border-bottom: 3px solid #a8a8a8; border-radius: 2px; }
.swatch { width: 30px; height: 29px; background: #fff; border: 2px solid #8a8a8a; }
.fx { display: flex; align-items: center; justify-content: center; width: 43px; height: 44px; background: #fff; border: 1.5px solid #b8b8b8; border-bottom: 3px solid #a8a8a8; border-radius: 2px; font: italic 26px "Liberation Serif", serif; color: #333; }
.slide-row { display: flex; align-items: center; height: 44px; }
.num { display: flex; align-items: center; justify-content: space-between; width: 98px; height: 44px; padding: 0 11px 0 8px; background: #fff; border: 1.5px solid #b8b8b8; border-bottom: 3px solid #a8a8a8; border-radius: 2px; font-size: 20px; }
.off .num { background: #f3f2f1; color: #a6a5a4; border-color: #d0d0d0; }
.spin { display: flex; flex-direction: column; gap: 10px; }
.spin-u { width: 14px; height: 8px; color: #777; transform: rotate(180deg); }
.spin-d { width: 14px; height: 8px; color: #777; }
.knob { width: 25px; height: 25px; margin-left: 10px; border-radius: 50%; background: #fff; border: 3px solid #666; flex: none; position: relative; z-index: 1; }
.knob.small { width: 18px; height: 20px; margin-left: 13px; margin-right: 3px; border-width: 2px; }
.track { width: 126px; height: 7px; background: #c8c8c8; flex: none; }
.browse { display: flex; align-items: center; justify-content: space-between; height: 46px; margin-top: 27px; padding: 0 14px 0 8px; background: #fff; border: 1.5px solid #b8b8b8; border-bottom: 3px solid #a8a8a8; border-radius: 2px; font-size: 19.5px; }
.browse-i { width: 22px; height: 22px; }
.fc-row { display: flex; align-items: center; height: 73px; padding-left: 18px; font-weight: 600; }
.row-cv { width: 13px; height: 22px; margin-right: 13px; color: #444; flex: none; }
.sm-off { margin-left: auto; }
.fc-row .toggle-off { width: 59px; height: 29px; padding-left: 8px; }

/* data pane */
.data { display: flex; flex-direction: column; width: 333px; background: #f3f2f1; border-left: 1px solid #dedede; flex: none; }
.s-d { width: 315px; height: 48px; margin: 11px 0 0 8px; padding-left: 15px; }
.tree { list-style: none; margin: 17px 0 0; padding: 0; font-size: 20.5px; color: #444; }
.tr { position: relative; display: flex; align-items: center; height: 44px; padding-left: 16px; white-space: nowrap; }
.tr-cv { width: 16px; height: 10px; color: #888; margin-right: 8px; flex: none; }
.tr-cr { width: 10px; height: 20px; margin-left: 3px; margin-right: 12px; color: #888; flex: none; }
.tr-tb { width: 30px; height: 30px; flex: none; }
.ok-badge { position: absolute; left: 54px; top: 20px; display: flex; align-items: center; justify-content: center; width: 20px; height: 20px; border-radius: 50%; background: #417a66; }
.ok-i { width: 10px; height: 8px; }
.nm { margin-left: 13px; }
.tr-name { color: #444; }
.tr-grid { width: 24px; height: 28px; margin-right: 10px; flex: none; }
.tr-leaf { padding-left: 70px; }
.chk { display: flex; align-items: center; justify-content: center; width: 22px; height: 22px; margin-right: 14px; background: #fff; border: 1.5px solid #777; border-radius: 2px; flex: none; }
.chk.on { background: #417a66; border-color: #417a66; }
.chk-i { width: 14px; height: 12px; }
.leaf-i { width: 21px; height: 30px; margin-right: 13px; flex: none; }

/* right rail */
.siderail { display: flex; flex-direction: column; align-items: center; width: 52px; background: #fafafa; border-left: 1px solid #e4e4e4; flex: none; }
.sr { display: flex; align-items: center; justify-content: center; width: 100%; flex: none; }
.sr-a { height: 59px; }
.sr-b { height: 57px; background: #dcdcdc; border: 1px solid #8f8f8f; border-right: 0; }
.sr-c { height: 68px; }
.sr-d { height: 40px; }
.sr-i { width: 32px; height: 36px; }
.sr-i.plus { width: 30px; height: 30px; }
.sr-gear { display: flex; align-items: center; justify-content: center; width: 100%; height: 58px; margin-top: auto; background: #fff; border-top: 1px solid #e0e0e0; }
.gear { width: 36px; height: 36px; }

/* status bar */
.status { display: flex; align-items: center; justify-content: space-between; height: 43px; padding-bottom: 4px; background: #f3f2f1; border-top: 1.5px solid #e0e0e0; font-size: 19px; color: #444; flex: none; }
.zoomer { display: flex; align-items: center; padding-right: 28px; padding-top: 4px; }
.z-sign { font-size: 24px; color: #444; font-weight: 600; line-height: 30px; }
.z-track { position: relative; width: 184px; height: 2px; margin-left: 9px; background: #666; }
.z-thumb { position: absolute; left: 90px; top: -10px; width: 8px; height: 22px; background: #666; border-radius: 2px; }
.z-sign.plus { margin-left: 9px; font-size: 26px; font-weight: 400; }
.z-val { margin-left: 22px; font-size: 19.5px; color: #666; }
.z-fit { width: 28px; height: 22px; margin-left: 28px; }

/* tutorial annotations, laid over the app */
.redbox { position: absolute; border: 3.5px solid #b01c20; z-index: 5; }
.rb-1 { left: 3173px; top: 475px; width: 198px; height: 48px; }
.rb-2 { left: 2809px; top: 1257px; width: 298px; height: 67px; }
.rb-3 { left: 2809px; top: 1570px; width: 298px; height: 67px; }
.rb-4 { display: flex; align-items: center; justify-content: center; left: 3107px; top: 1714px; width: 248px; height: 74px; background: #fff; font: 700 39px "Liberation Sans", sans-serif; color: #000; }
.step { position: absolute; display: flex; align-items: center; justify-content: center; width: 93px; height: 93px; border-radius: 50%; background: #ae1b1f; color: #fff; font: 700 62px "Liberation Sans", sans-serif; z-index: 6; }
.s-1 { left: 2990px; top: 537px; }
.s-2 { left: 3255px; top: 1294px; }
.s-3 { left: 3255px; top: 1599px; }
.marks { position: absolute; left: 0; top: 0; width: 3508px; height: 1898px; pointer-events: none; z-index: 6; }
.mark-line { fill: none; stroke: #ae1b1f; stroke-width: 3.5; }
.mark-fill { fill: #ae1b1f; }
```
